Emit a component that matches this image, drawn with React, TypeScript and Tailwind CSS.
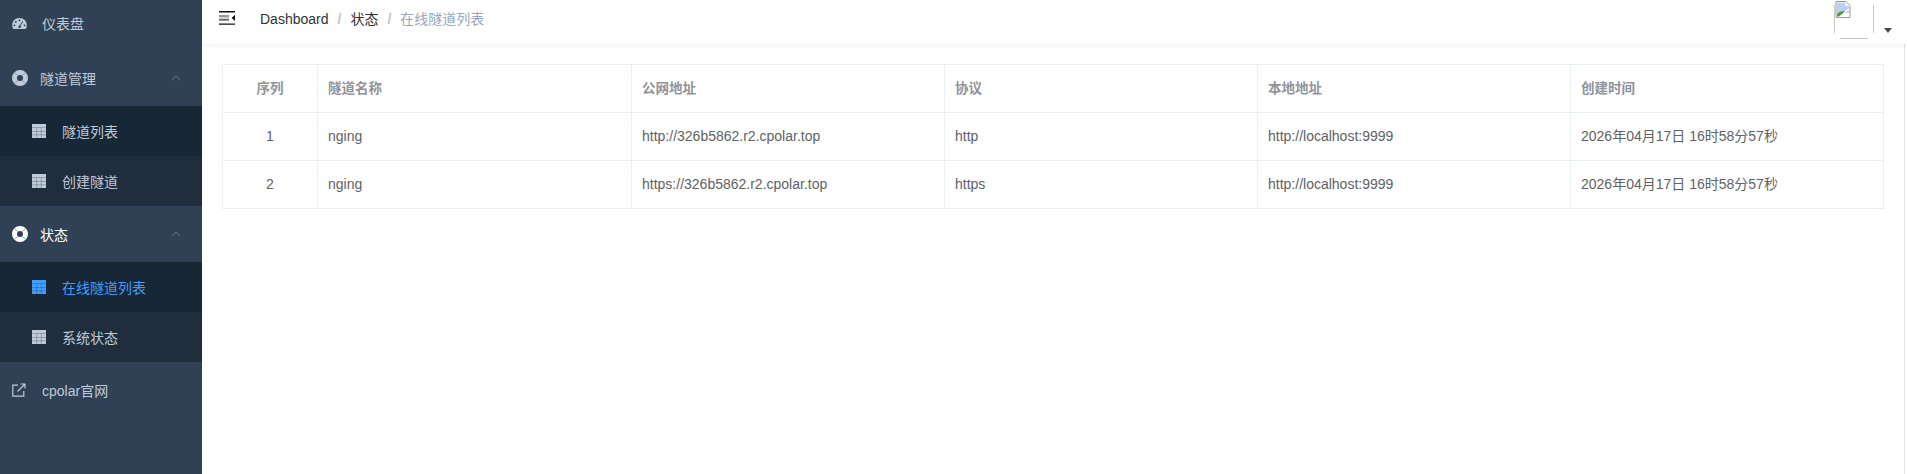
import React from "react";

const sans = "font-['Liberation_Sans','Noto_Sans_CJK_SC',sans-serif]";

function Gauge() {
  return (
    <svg width="15" height="11" viewBox="0 0 15 11" className="shrink-0">
      <path fill="currentColor" fillRule="evenodd" d="M7.5 0C3.4 0 .2 3.1 .2 7.2c0 1.4.4 2.7 1.1 3.8h12.4c.7-1.1 1.1-2.4 1.1-3.8C14.8 3.1 11.6 0 7.5 0zM7.5 1.5a.9.9 0 1 1 0 1.8.9.9 0 0 1 0-1.8zM3.8 3a.9.9 0 1 1 0 1.8.9.9 0 0 1 0-1.8zM2.4 6.4a.9.9 0 1 1 0 1.8.9.9 0 0 1 0-1.8zM12.6 6.4a.9.9 0 1 1 0 1.8.9.9 0 0 1 0-1.8zM10.4 3.2l.8.4L8.6 7.8a1.3 1.3 0 1 1-.8-.4z" />
    </svg>
  );
}

function Ring() {
  return (
    <svg width="16" height="16" viewBox="0 0 16 16" className="shrink-0">
      <circle cx="8" cy="8" r="5.5" fill="none" stroke="currentColor" strokeWidth="5" />
      <path d="M2.6 2.6 5.6 5.6M13.4 2.6 10.4 5.6M2.6 13.4 5.6 10.4M13.4 13.4 10.4 10.4" stroke="#5f87ad" strokeWidth="1" opacity="0.7" />
    </svg>
  );
}

function TableIcon() {
  return (
    <svg width="14" height="14" viewBox="0 0 14 14" className="shrink-0">
      <rect width="14" height="14" fill="currentColor" />
      <path d="M0 3.5h14M0 7.5h14M0 10.8h14M4.7 3.5V14M9.3 3.5V14" stroke="#1f2d3d" strokeWidth="0.7" opacity="0.4" fill="none" />
    </svg>
  );
}

function External() {
  return (
    <svg width="14" height="14" viewBox="0 0 14 14" fill="none" stroke="currentColor" strokeWidth="1.2" className="shrink-0">
      <path d="M6 2.2H.8v11h11V8" />
      <path d="M5.5 8.5 12.5 1.5M8.6 1h4.4v4.4" />
    </svg>
  );
}

function Chevron() {
  return (
    <svg width="10" height="6" viewBox="0 0 10 6" fill="none" stroke="#66758a" strokeWidth="1" className="absolute right-[21px] top-1/2 -mt-[3px]">
      <path d="M.8 5.2 5 1l4.2 4.2" />
    </svg>
  );
}

function Top({ icon, label, gap, chev, bright }: { icon: React.ReactNode; label: string; gap: string; chev?: boolean; bright?: boolean }) {
  return (
    <div className={`relative flex h-14 shrink-0 items-center pl-3 ${gap} ${bright ? "text-white" : "text-[#bfcbd9]"}`}>
      {icon}
      <span className="pt-[2px] text-sm">{label}</span>
      {chev && <Chevron />}
    </div>
  );
}

function Sub({ label, tone }: { label: string; tone: "dark" | "light" | "active" }) {
  const cls =
    tone === "light" ? "bg-[#1f2d3d] text-[#bfcbd9]" : tone === "dark" ? "bg-[#172736] text-[#bfcbd9]" : "bg-[#172736] text-[#409eff]";
  return (
    <div className={`flex h-[50px] shrink-0 items-center gap-[16px] pl-8 ${cls}`}>
      <TableIcon />
      <span className="pt-[2px] text-sm">{label}</span>
    </div>
  );
}

const headers = ["隧道名称", "公网地址", "协议", "本地地址", "创建时间"];
const rows = [
  ["1", "nging", "http://326b5862.r2.cpolar.top", "http", "http://localhost:9999", "2026年04月17日 16时58分57秒"],
  ["2", "nging", "https://326b5862.r2.cpolar.top", "https", "http://localhost:9999", "2026年04月17日 16时58分57秒"],
];

export default function App() {
  return (
    <div className={`flex h-[474px] w-[1907px] overflow-hidden bg-white ${sans}`}>
      <aside className="-mt-[5px] flex h-[479px] w-[202px] shrink-0 flex-col bg-[#304156]">
        <Top icon={<Gauge />} label="仪表盘" gap="gap-[15px]" />
        <div className="-mt-px" />
        <Top icon={<Ring />} label="隧道管理" gap="gap-3" chev />
        <Sub label="隧道列表" tone="dark" />
        <Sub label="创建隧道" tone="light" />
        <Top icon={<Ring />} label="状态" gap="gap-3" chev bright />
        <Sub label="在线隧道列表" tone="active" />
        <Sub label="系统状态" tone="light" />
        <Top icon={<External />} label="cpolar官网" gap="gap-4" />
      </aside>
      <main className="flex min-w-0 flex-1 flex-col">
        <header className="relative flex h-[44px] shrink-0 items-start shadow-[0_1px_4px_rgba(0,21,41,0.08)]">
          <svg width="16" height="14" viewBox="0 0 16 14" className="ml-[17px] mt-[11px] shrink-0">
            <path fill="#111" d="M0 0h16v1.4H0zM0 12.4h16v1.4H0zM16 3.8v6.2l-3.4-3.1z" />
            <path fill="#333" d="M0 4.4h10v1.2H0zM0 8.2h10v1.2H0z" />
            <path fill="#999" d="M0 5.6h10v2.6H0z" opacity="0.45" />
          </svg>
          <nav className="ml-[25px] mt-[10px] flex text-sm leading-[18px] text-[#303133]">
            <span>Dashboard</span>
            <span className="mx-[9px] font-bold text-[#c0c4cc]">/</span>
            <span>状态</span>
            <span className="mx-[9px] font-bold text-[#c0c4cc]">/</span>
            <span className="text-[#97a8be]">在线隧道列表</span>
          </nav>
          <div className="absolute right-[15px] top-0 flex items-start">
            <svg width="41" height="40" viewBox="0 0 41 40" className="shrink-0">
              <path d="M1.5 5v28M40.5 5v28M7 38.5h28" stroke="#c8c8c8" strokeWidth="1" fill="none" />
              <path d="M3 1.5h10l4 4v12H3z" fill="#fff" stroke="#9a9a9a" strokeWidth="1" />
              <path d="M4 2.5h8.5V6H16v7H4z" fill="#bcd0f2" />
              <path d="M4 16.5v-2.6c2-2.6 5-3.2 8-2.4l-4.5 5z" fill="#4f9d32" />
              <path d="M6.5 17 16 9" stroke="#fff" strokeWidth="1.4" />
            </svg>
            <div className="ml-[10px] mt-[28px] h-0 w-0 border-x-[4px] border-t-[5px] border-x-transparent border-t-[#4a4a55]" />
          </div>
        </header>
        <section className="mr-[2px] flex-1 border-r border-[#e4e4e4] pl-5 pt-5">
          <table className="w-[1662px] table-fixed border-collapse border border-[#ebeef5] text-sm">
            <colgroup>
              <col className="w-[95px]" />
              <col className="w-[314px]" />
              <col className="w-[313px]" />
              <col className="w-[313px]" />
              <col className="w-[313px]" />
              <col className="w-[313px]" />
            </colgroup>
            <thead>
              <tr className="h-12">
                <th className="border border-[#ebeef5] text-center text-[13.5px] font-bold text-[#909399]">序列</th>
                {headers.map((h) => (
                  <th key={h} className="border border-[#ebeef5] px-[10px] text-left text-[13.5px] font-bold text-[#909399]">
                    {h}
                  </th>
                ))}
              </tr>
            </thead>
            <tbody>
              {rows.map((r) => (
                <tr key={r[0]} className="h-12">
                  {r.map((c, i) => (
                    <td key={i} className={`border border-[#ebeef5] px-[10px] pb-[2px] text-[#606266] ${i === 0 ? "text-center" : "text-left"}`}>
                      {c}
                    </td>
                  ))}
                </tr>
              ))}
            </tbody>
          </table>
        </section>
      </main>
    </div>
  );
}
